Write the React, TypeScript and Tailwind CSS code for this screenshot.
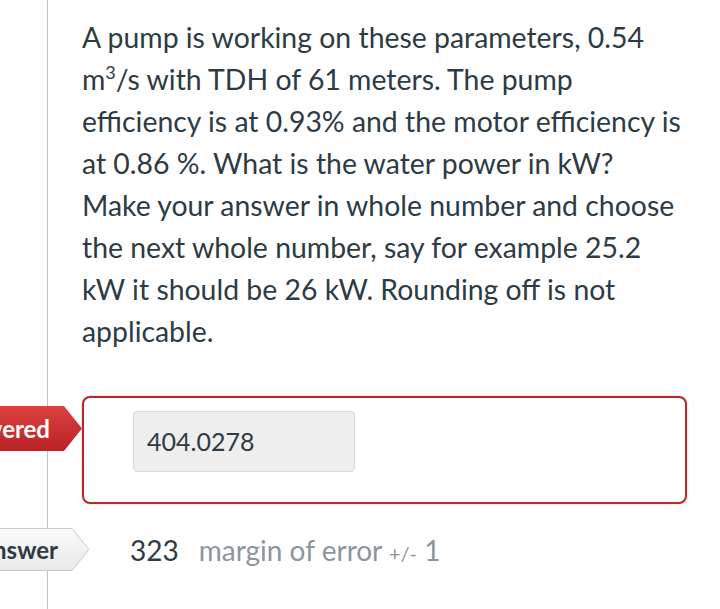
import React from 'react';

// Tag shape drawn behind the label: a box with a pointed right end
const Tag = ({ label, tone }: { label: string; tone: 'red' | 'gray' }) => {
  const red = tone === 'red';
  return (
    <div className={`relative h-full w-[220px] ${red ? 'text-white' : 'text-[#2d3b45]'}`}>
      <svg className="absolute inset-0 h-full w-full" viewBox="0 0 220 45" preserveAspectRatio="none">
        <defs>
          <linearGradient id="tagRed" x1="0" y1="0" x2="0" y2="1">
            <stop offset="0" stopColor="#dc4140" />
            <stop offset="1" stopColor="#b92226" />
          </linearGradient>
          <linearGradient id="tagGray" x1="0" y1="0" x2="0" y2="1">
            <stop offset="0" stopColor="#fafafa" />
            <stop offset="1" stopColor="#e9e9e9" />
          </linearGradient>
        </defs>
        {red ? (
          <polygon points="0,0 202,0 220,22.5 202,45 0,45" fill="url(#tagRed)" />
        ) : (
          <polygon
            points="0,0.5 202,0.5 219,22.5 202,44.5 0,44.5"
            fill="url(#tagGray)"
            stroke="#c9c9c9"
            strokeWidth="1"
          />
        )}
      </svg>
      <span className="relative flex h-full items-center justify-end pr-[32px] text-[24px] font-bold">
        {label}
      </span>
    </div>
  );
};

export default function App() {
  return (
    <div className="flex min-h-[609px] overflow-hidden bg-white font-['Lato',sans-serif] text-[#2d3b45]">
      {/* left rail */}
      <div className="w-[48px] shrink-0 border-r border-[#bcc2c7]" />

      <div className="flex-1 pl-[34px] pr-[33px]">
        <p className="mt-[16px] text-[28.4px] leading-[42px]">
          A pump is working on these parameters, 0.54
          <br />
          m<span className="relative top-[-11px] text-[18px] leading-none">3</span>/s with TDH of 61 meters. The pump
          <br />
          efficiency is at 0.93% and the motor efficiency is
          <br />
          at 0.86 %. What is the water power in kW?
          <br />
          Make your answer in whole number and choose
          <br />
          the next whole number, say for example 25.2
          <br />
          kW it should be 26 kW. Rounding off is not
          <br />
          applicable.
        </p>

        {/* submitted answer */}
        <div className="relative mt-[44px] h-[108px] rounded-[8px] border-2 border-[#b5292e] shadow-[0_0_2px_rgba(181,41,46,0.4)]">
          <div className="absolute right-[calc(100%+2px)] top-[8px] h-[45px]">
            <Tag label="You Answered" tone="red" />
          </div>
          <div className="ml-[49px] mt-[13px] flex h-[61px] w-[222px] items-center rounded-[4px] border border-[#dadada] bg-[#eeeeee] pl-[13px] text-[25px]">
            404.0278
          </div>
        </div>

        {/* correct answer */}
        <div className="relative mt-[24px] flex h-[43px] items-center pl-[48px] text-[28px]">
          <div className="absolute right-[calc(100%-8px)] top-0 h-[43px]">
            <Tag label="Correct Answer" tone="gray" />
          </div>
          <span>323</span>
          <span className="ml-[20px] text-[#8b959c]">
            margin of error <span className="text-[20px]">+/-</span> 1
          </span>
        </div>
      </div>
    </div>
  );
}
